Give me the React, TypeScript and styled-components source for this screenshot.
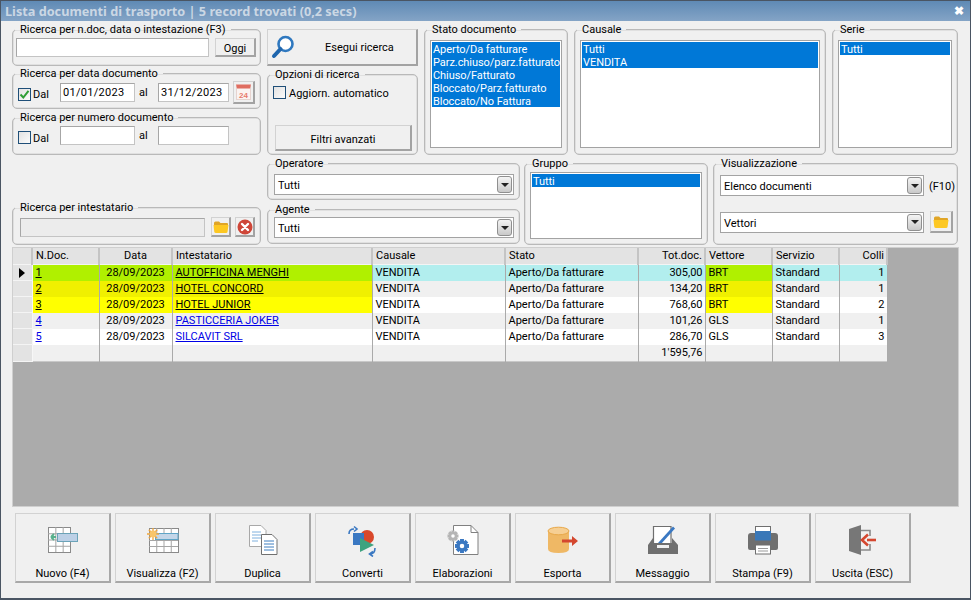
import React from 'react';
import styled, { createGlobalStyle } from 'styled-components';

const GlobalStyle = createGlobalStyle`
  html, body { margin: 0; padding: 0; background: #f0f0f0; }
  body { font-family: Roboto, "Liberation Sans", sans-serif; font-size: 11px; color: #000; }
`;

const Window = styled.div`
  width: 971px;
  height: 600px;
  box-sizing: border-box;
  background: #f0f0f0;
  border: 1px solid #4a5563;
  border-bottom-width: 2px;
  display: flex;
  flex-direction: column;
  overflow: hidden;
`;

const TitleBar = styled.div`
  height: 20px;
  flex: none;
  display: flex;
  align-items: center;
  justify-content: space-between;
  padding: 0 6px 0 4px;
  background: linear-gradient(180deg, #5f8ab5 0%, #84a4c6 100%);
  color: #cbd7e4;
  font-family: "Noto Sans", sans-serif;
  font-weight: 700;
  font-size: 12.7px;
`;

const CloseBox = styled.span`
  color: #fff;
  font-size: 12px;
  font-weight: 700;
  line-height: 1;
`;

const Body = styled.div`
  flex: 1;
  display: flex;
  flex-direction: column;
  padding: 1px 0 0 11px;
`;

const UpperRow = styled.div`
  display: grid;
  grid-template-columns: 249px 151px 144px 252px 126px;
  height: 133px;
  column-gap: 6px;
`;

const LowerRow = styled.div`
  display: flex;
  height: 89px;
  margin-top: 1px;
`;

const Stack = styled.div`
  display: flex;
  flex-direction: column;
  width: ${p => p.$w}px;
  margin-right: ${p => p.$mr || 0}px;
  justify-content: ${p => p.$end ? 'flex-end' : 'flex-start'};
`;

const Group = styled.fieldset`
  box-sizing: border-box;
  margin: ${p => p.$mt || 0}px ${p => p.$mr || 0}px 0 0;
  padding: 0;
  min-width: 0;
  width: ${p => p.$w ? `${p.$w}px` : 'auto'};
  height: ${p => p.$h ? `${p.$h}px` : 'auto'};
  border: 1px solid #b9b9b9;
  box-shadow: inset 0 0 0 0.5px #cfcfcf;
  border-radius: 5px;
  position: relative;
`;

const Legend = styled.legend`
  margin-left: 2px;
  padding: 0 5px;
  height: 14px;
  line-height: 16px;
  font-size: 11px;
  white-space: nowrap;
`;

const Row = styled.div`
  display: flex;
  align-items: center;
  padding: ${p => p.$pad || '0'};
`;

const TextBox = styled.div`
  box-sizing: border-box;
  width: ${p => p.$w}px;
  height: ${p => p.$h || 19}px;
  margin-right: ${p => p.$mr || 0}px;
  background: ${p => p.$disabled ? '#ececec' : '#fff'};
  border: 1px solid #a6a6a6;
  border-right-color: #c4c4c4;
  border-bottom-color: #c4c4c4;
  padding-left: 2px;
  line-height: 17px;
  letter-spacing: 0.3px;
`;

const Raised = styled.button`
  box-sizing: border-box;
  width: ${p => p.$w}px;
  height: ${p => p.$h}px;
  margin: 0 ${p => p.$mr || 0}px 0 ${p => p.$ml || 0}px;
  padding: ${p => p.$pt || 0}px 0 0;
  flex: none;
  font: inherit;
  color: #000;
  background: #f0f0f0;
  border: 1px solid #d2d2d2;
  border-right: 2px solid #a3a3a3;
  border-bottom: 2px solid #a3a3a3;
  display: flex;
  align-items: center;
  justify-content: center;
`;

const SearchButton = styled(Raised)`
  justify-content: flex-start;
  padding-left: 3px;
  margin-top: 7px;
`;

const SearchLabel = styled.span`
  margin-left: 30px;
`;

const CheckMark = styled.span`
  box-sizing: border-box;
  width: 13px;
  height: 13px;
  flex: none;
  margin: ${p => p.$mt || 0}px ${p => p.$mr || 2}px 0 0;
  border: 1px solid #1f4f78;
  background: linear-gradient(135deg, #e2e2e2, #fbfbfb);
  display: flex;
  align-items: center;
  justify-content: center;
`;

const Plain = styled.span`
  width: ${p => p.$w ? `${p.$w}px` : 'auto'};
  margin-left: ${p => p.$ml || 0}px;
  margin-top: ${p => p.$mt || 0}px;
  flex: none;
`;

const ListBox = styled.div`
  box-sizing: border-box;
  height: ${p => p.$h}px;
  margin: ${p => p.$m};
  background: #fff;
  border: 1px solid #a3a3a3;
  padding: 1px;
  overflow: hidden;
`;

const ListItem = styled.div`
  height: 13px;
  line-height: 15px;
  letter-spacing: -0.06px;
  background: #0078d7;
  color: #fff;
  padding-left: 1px;
  white-space: nowrap;
  overflow: hidden;
`;

const Select = styled.div`
  box-sizing: border-box;
  width: ${p => p.$w}px;
  height: ${p => p.$h || 21}px;
  margin: ${p => p.$m || 0};
  background: #fff;
  border: 1px solid #a3a3a3;
  display: flex;
  align-items: center;
  justify-content: space-between;
  padding: 0 1px 0 3px;
  flex: none;
`;

const SelectText = styled.span`
  margin-top: 2px;
`;

const Arrow = styled.span`
  box-sizing: border-box;
  width: 15px;
  height: 17px;
  border: 1px solid #8f8f8f;
  border-radius: 3px;
  background: linear-gradient(180deg, #f4f4f4, #c9c9c9);
  display: flex;
  align-items: center;
  justify-content: center;

  &::after {
    content: '';
    border-left: 4px solid transparent;
    border-right: 4px solid transparent;
    border-top: 4px solid #222;
  }
`;

const GridArea = styled.div`
  box-sizing: border-box;
  width: 947px;
  height: 260px;
  margin-top: 2px;
  background: #ababab;
  border: 1px solid #cfcfcf;
`;

const Table = styled.table`
  table-layout: fixed;
  border-collapse: collapse;
  width: 874px;
  font-size: 11px;
`;

const HeadCell = styled.th`
  height: 16px;
  padding: 1px ${p => p.$align === 'right' ? 2 : 3}px 0 3px;
  background: #e3e3e3;
  border-right: 2px solid #c4c4c4;
  border-bottom: 1px solid #f4f4f4;
  font-weight: 400;
  text-align: ${p => p.$align || 'left'};
  line-height: 14px;
  white-space: nowrap;
  overflow: hidden;
  box-sizing: border-box;
`;

const RowHead = styled.td`
  height: 16px;
  padding: 0;
  background: #e3e3e3;
  border-right: 1px solid #f7f7f7;
  border-bottom: 1px solid #f4f4f4;
  text-align: center;
  box-sizing: border-box;
`;

const Marker = styled.span`
  display: inline-block;
  border-left: 6px solid #000;
  border-top: 5px solid transparent;
  border-bottom: 5px solid transparent;
  vertical-align: middle;
`;

const Cell = styled.td`
  height: 16px;
  padding: 1px ${p => p.$align === 'right' ? 2 : 3}px 1px 3px;
  box-sizing: border-box;
  background: ${p => p.$bg};
  border-right: 1px solid #aaa;
  text-align: ${p => p.$align || 'left'};
  line-height: 14px;
  white-space: nowrap;
  overflow: hidden;
`;

const TotalRow = styled.tr`
  border-bottom: 1px solid #c8c8c8;
`;

const DocLink = styled.a`
  color: ${p => p.$dark ? '#000' : '#0000e6'};
  text-decoration: underline;
`;

const Toolbar = styled.div`
  display: flex;
  gap: 4px;
  margin: 6px 0 0 3px;
`;

const ToolButton = styled.button`
  box-sizing: border-box;
  width: 96px;
  height: 70px;
  padding: 10px 0 0;
  font: inherit;
  color: #000;
  background: #f0f0f0;
  border: 1px solid #d2d2d2;
  border-right: 2px solid #a8a8a8;
  border-bottom: 2px solid #a8a8a8;
  display: flex;
  flex-direction: column;
  align-items: center;
`;

const ToolLabel = styled.span`
  margin-top: 9px;
  line-height: 16px;
`;

const SvgIcon = styled.svg`
  display: block;
  flex: none;
`;

const Magnifier = () => (
  <SvgIcon width="24" height="24" viewBox="0 0 24 24">
    <circle cx="14.5" cy="9" r="7" fill="#fff" stroke="#2f78bf" strokeWidth="2.6" />
    <path d="M9.5 14 L3 21" stroke="#1f66ae" strokeWidth="4" strokeLinecap="round" />
  </SvgIcon>
);

const Folder = () => (
  <SvgIcon width="16" height="14" viewBox="0 0 16 14">
    <path d="M1 3 Q1 1.5 2.5 1.5 H6 L7.5 3 H14 Q15 3 15 4 V5 H1 Z" fill="#e0a526" />
    <path d="M0.5 5 H15.5 L14.5 12 Q14.3 13 13 13 H3 Q1.5 13 1.3 12 Z" fill="#fdc823" />
  </SvgIcon>
);

const CancelIcon = () => (
  <SvgIcon width="16" height="16" viewBox="0 0 16 16">
    <circle cx="8" cy="8" r="7.5" fill="#cf4638" />
    <path d="M5 5 L11 11 M11 5 L5 11" stroke="#fff" strokeWidth="2.4" strokeLinecap="round" />
  </SvgIcon>
);

const CalendarIcon = () => (
  <SvgIcon width="18" height="18" viewBox="0 0 18 18">
    <rect x="1.5" y="3.5" width="14" height="13" fill="#fbf3f1" stroke="#e6d3cf" />
    <path d="M1 1.5 H16 L15 5.5 H2 Z" fill="#df6d60" />
    <text x="8.5" y="14.5" fontSize="8" fontWeight="700" fill="#e77a6c" textAnchor="middle" fontFamily="Liberation Sans">24</text>
  </SvgIcon>
);

const Tick = () => (
  <SvgIcon width="11" height="11" viewBox="0 0 11 11">
    <path d="M1.5 5.5 L4.3 8.5 L9.5 1.8" fill="none" stroke="#2f9e35" strokeWidth="2" />
  </SvgIcon>
);

const GridLines = ({ x, y, w, h, cols, rows }: { x: number; y: number; w: number; h: number; cols: number; rows: number }) => (
  <g stroke="#8a8a8a" strokeWidth="1" fill="#fff">
    <rect x={x + 0.5} y={y + 0.5} width={w} height={h} />
    {Array.from({ length: cols - 1 }, (_, i) => (
      <line key={`c${i}`} x1={x + 0.5 + ((i + 1) * w) / cols} x2={x + 0.5 + ((i + 1) * w) / cols} y1={y} y2={y + h} stroke="#a5a5a5" />
    ))}
    {Array.from({ length: rows - 1 }, (_, i) => (
      <line key={`r${i}`} y1={y + 0.5 + ((i + 1) * h) / rows} y2={y + 0.5 + ((i + 1) * h) / rows} x1={x} x2={x + w} stroke="#a5a5a5" />
    ))}
  </g>
);

const Gear = ({ cx, cy, r, fill }: { cx: number; cy: number; r: number; fill: string }) => (
  <g>
    {[0, 45, 90, 135].map(a => (
      <rect key={a} x={cx - r * 0.28} y={cy - r} width={r * 0.56} height={r * 2} fill={fill} transform={`rotate(${a} ${cx} ${cy})`} />
    ))}
    <circle cx={cx} cy={cy} r={r * 0.72} fill={fill} />
    <circle cx={cx} cy={cy} r={r * 0.32} fill="#fff" />
  </g>
);

const icons: Record<string, React.ReactNode> = {
  nuovo: (
    <>
      <GridLines x={5} y={3} w={22} h={25} cols={3} rows={4} />
      <rect x={14.5} y={9.5} width={20} height={8} fill="#bcd0e6" stroke="#6ba3b8" />
      <path d="M13 13 H8 M8 13 L11 10 M8 13 L11 16" fill="none" stroke="#58b08c" strokeWidth="2" />
    </>
  ),
  visualizza: (
    <>
      <GridLines x={6} y={4} w={29} h={24} cols={4} rows={4} />
      <rect x={12.5} y={9.5} width={22.5} height={6} fill="#c4d6e8" stroke="#5fa5c7" />
      <g stroke="#f0a63c" strokeWidth="1.3">
        <path d="M10 4 V16 M4 10 H16 M5.8 5.8 L14.2 14.2 M14.2 5.8 L5.8 14.2" />
      </g>
      <circle cx="10" cy="10" r="3.4" fill="#f8c56a" />
    </>
  ),
  duplica: (
    <>
      <path d="M6.5 1.5 H18 L23 6.5 V22.5 H6.5 Z" fill="#fff" stroke="#a8a8a8" />
      <path d="M9 8 H18 M9 11 H18 M9 14 H18 M9 17 H15" stroke="#7fb0de" strokeWidth="1" />
      <path d="M18.5 10.5 H29 L34 15.5 V30.5 H18.5 Z" fill="#fff" stroke="#707070" />
      <path d="M21 17 H31 M21 20 H31 M21 23 H31 M21 26 H31" stroke="#3f7fc0" strokeWidth="1" />
    </>
  ),
  converti: (
    <>
      <circle cx="24" cy="13" r="7" fill="#d9482b" />
      <rect x="10" y="9" width="11" height="12" fill="#3a78c2" />
      <path d="M17 14 L31 21 L17 28 Z" fill="#3fa37f" />
      <path d="M6 10 Q6 5 11 5 M11 2.5 L14 5 L11 7.5" fill="none" stroke="#3a78c2" strokeWidth="1.6" />
      <path d="M32 24 Q32 30 27 30 M30 27.5 L26.5 30 L30 32.5" fill="none" stroke="#3a78c2" strokeWidth="1.6" />
    </>
  ),
  elaborazioni: (
    <>
      <path d="M10.5 1.5 H28 L35 8.5 V30.5 H10.5 Z" fill="#fff" stroke="#808080" />
      <path d="M28 1.5 V8.5 H35" fill="none" stroke="#808080" />
      <Gear cx={10} cy={12} r={5.5} fill="#b5b5b5" />
      <Gear cx={19} cy={22} r={7} fill="#3a78c2" />
    </>
  ),
  esporta: (
    <>
      <path d="M5 7 V25 Q5 29 15.5 29 Q26 29 26 25 V7 Z" fill="#efb865" />
      <ellipse cx="15.5" cy="7" rx="10.5" ry="3.8" fill="#f6cf93" stroke="#e8a849" />
      <path d="M19 15.5 H29 V12 L35 17 L29 22 V18.5 H19 Z" fill="#d4472f" />
    </>
  ),
  messaggio: (
    <>
      <path d="M10.5 2.5 H28 V22 H10.5 Z" fill="#fff" stroke="#6f6f6f" strokeWidth="1.2" />
      <path d="M15 19 L30 2.5 L32 4.5 L18 20 L14.5 21 Z" fill="#3a78c2" />
      <path d="M5 21 L10 14 V19 H29 V14 L35 21 V30 H5 Z" fill="#6f6f6f" />
      <path d="M14 21 H26 V24 H14 Z" fill="#f0f0f0" />
    </>
  ),
  stampa: (
    <>
      <rect x="12.5" y="2.5" width="15" height="8" fill="#fff" stroke="#6f6f6f" />
      <path d="M5 12 Q5 9 8 9 H32 Q35 9 35 12 V24 Q35 26 33 26 H7 Q5 26 5 24 Z" fill="#6f6f6f" />
      <rect x="12" y="7" width="16" height="9.5" fill="#3a78b8" />
      <rect x="12.5" y="21" width="15" height="9" fill="#fff" stroke="#6f6f6f" />
      <path d="M15 24.5 H25 M15 27 H25" stroke="#9a9a9a" />
    </>
  ),
  uscita: (
    <>
      <path d="M18 6.5 H27 V12 M27 20 V26 H18" fill="none" stroke="#8a8a8a" strokeWidth="1.6" />
      <path d="M6 5 L18 1 V31 L6 27 Z" fill="#777" />
      <path d="M33 16 H24" stroke="#d4472f" strokeWidth="2.6" />
      <path d="M25 10.5 L19 16 L25 21.5" fill="none" stroke="#d4472f" strokeWidth="2.6" />
    </>
  ),
};

const toolButtons = [
  ['nuovo', 'Nuovo (F4)'],
  ['visualizza', 'Visualizza (F2)'],
  ['duplica', 'Duplica'],
  ['converti', 'Converti'],
  ['elaborazioni', 'Elaborazioni'],
  ['esporta', 'Esporta'],
  ['messaggio', 'Messaggio'],
  ['stampa', 'Stampa (F9)'],
  ['uscita', 'Uscita (ESC)'],
];

const columns: [string, number, 'left' | 'center' | 'right'][] = [
  ['N.Doc.', 67, 'left'],
  ['Data', 73, 'center'],
  ['Intestatario', 200, 'left'],
  ['Causale', 133, 'left'],
  ['Stato', 133, 'left'],
  ['Tot.doc.', 67, 'right'],
  ['Vettore', 67, 'left'],
  ['Servizio', 67, 'left'],
  ['Colli', 48, 'right'],
];

const rows = [
  { n: '1', name: 'AUTOFFICINA MENGHI', tot: '305,00', vet: 'BRT', colli: '1', mark: '#b0f000', base: '#b2eeee' },
  { n: '2', name: 'HOTEL CONCORD', tot: '134,20', vet: 'BRT', colli: '1', mark: '#f0f000', base: '#f0f0f0' },
  { n: '3', name: 'HOTEL JUNIOR', tot: '768,60', vet: 'BRT', colli: '2', mark: '#ffff00', base: '#ffffff' },
  { n: '4', name: 'PASTICCERIA JOKER', tot: '101,26', vet: 'GLS', colli: '1', mark: '', base: '#f0f0f0' },
  { n: '5', name: 'SILCAVIT SRL', tot: '286,70', vet: 'GLS', colli: '3', mark: '', base: '#ffffff' },
];

const App: React.FC = () => (
  <Window>
    <GlobalStyle />
    <TitleBar>
      <span>Lista documenti di trasporto | 5 record trovati (0,2 secs)</span>
      <CloseBox>✖</CloseBox>
    </TitleBar>
    <Body>
      <UpperRow>
        <Stack $w={249}>
          <Group $h={44}>
            <Legend>Ricerca per n.doc, data o intestazione (F3)</Legend>
            <Row $pad="2px 0 0 3px">
              <TextBox $w={193} $mr={6} />
              <Raised $w={41} $h={19} $pt={2}>Oggi</Raised>
            </Row>
          </Group>
          <Group $h={43}>
            <Legend>Ricerca per data documento</Legend>
            <Row $pad="1px 0 0 5px">
              <CheckMark $mr={2} $mt={3}><Tick /></CheckMark>
              <Plain $w={27} $mt={4}>Dal</Plain>
              <TextBox $w={75} $mr={4}>01/01/2023</TextBox>
              <Plain $w={19}>al</Plain>
              <TextBox $w={71} $mr={4}>31/12/2023</TextBox>
              <Raised $w={22} $h={23}><CalendarIcon /></Raised>
            </Row>
          </Group>
          <Group $h={45} $mt={1}>
            <Legend>Ricerca per numero documento</Legend>
            <Row $pad="2px 0 0 5px">
              <CheckMark $mr={2} $mt={4} />
              <Plain $w={27} $mt={6}>Dal</Plain>
              <TextBox $w={75} $mr={4} />
              <Plain $w={19}>al</Plain>
              <TextBox $w={71} />
            </Row>
          </Group>
        </Stack>
        <Stack $w={151}>
          <SearchButton $w={151} $h={37}>
            <Magnifier />
            <SearchLabel>Esegui ricerca</SearchLabel>
          </SearchButton>
          <Group $h={88} $mt={1}>
            <Legend>Opzioni di ricerca</Legend>
            <Row $pad="4px 0 25px 5px">
              <CheckMark $mr={3} />
              <Plain $mt={2}>Aggiorn. automatico</Plain>
            </Row>
            <Raised $w={137} $h={26} $ml={7} $pt={3}>Filtri avanzati</Raised>
          </Group>
        </Stack>
        <Group>
          <Legend>Stato documento</Legend>
          <ListBox $h={108} $m="4px 5px 0 5px">
            {['Aperto/Da fatturare', 'Parz.chiuso/parz.fatturato', 'Chiuso/Fatturato', 'Bloccato/Parz.fatturato', 'Bloccato/No Fattura'].map(s => (
              <ListItem key={s}>{s}</ListItem>
            ))}
          </ListBox>
        </Group>
        <Group>
          <Legend>Causale</Legend>
          <ListBox $h={108} $m="4px 5px 0 5px">
            <ListItem>Tutti</ListItem>
            <ListItem>VENDITA</ListItem>
          </ListBox>
        </Group>
        <Group>
          <Legend>Serie</Legend>
          <ListBox $h={108} $m="4px 5px 0 5px">
            <ListItem>Tutti</ListItem>
          </ListBox>
        </Group>
      </UpperRow>
      <LowerRow>
        <Stack $w={249} $mr={6} $end>
          <Group $h={45}>
            <Legend>Ricerca per intestatario</Legend>
            <Row $pad="3px 0 0 7px">
              <TextBox $w={185} $h={19} $mr={6} $disabled />
              <Raised $w={20} $h={20} $mr={4}><Folder /></Raised>
              <Raised $w={20} $h={20}><CancelIcon /></Raised>
            </Row>
          </Group>
        </Stack>
        <Stack $w={253} $mr={4}>
          <Group $h={44}>
            <Legend>Operatore</Legend>
            <Select $w={240} $m="4px 0 0 6px"><SelectText>Tutti</SelectText><Arrow /></Select>
          </Group>
          <Group $h={42} $mt={2}>
            <Legend>Agente</Legend>
            <Select $w={240} $m="1px 0 0 6px"><SelectText>Tutti</SelectText><Arrow /></Select>
          </Group>
        </Stack>
        <Group $w={184} $mr={5}>
          <Legend>Gruppo</Legend>
          <ListBox $h={67} $m="2px 5px 0 5px">
            <ListItem>Tutti</ListItem>
          </ListBox>
        </Group>
        <Group $w={245}>
          <Legend>Visualizzazione</Legend>
          <Row $pad="5px 0 0 6px">
            <Select $w={204}><SelectText>Elenco documenti</SelectText><Arrow /></Select>
            <Plain $ml={5} $mt={2}>(F10)</Plain>
          </Row>
          <Row $pad="15px 0 0 6px">
            <Select $w={204}><SelectText>Vettori</SelectText><Arrow /></Select>
            <Raised $w={23} $h={22} $ml={6}><Folder /></Raised>
          </Row>
        </Group>
      </LowerRow>
      <GridArea>
        <Table>
          <colgroup>
            <col style={{ width: 19 }} />
            {columns.map(([name, w]) => <col key={name} style={{ width: w }} />)}
          </colgroup>
          <thead>
            <tr>
              <HeadCell />
              {columns.map(([name, , align]) => <HeadCell key={name} $align={align}>{name}</HeadCell>)}
            </tr>
          </thead>
          <tbody>
            {rows.map((r, i) => (
              <tr key={r.n}>
                <RowHead>{i === 0 && <Marker />}</RowHead>
                <Cell $bg={r.mark || r.base}><DocLink $dark={!!r.mark}>{r.n}</DocLink></Cell>
                <Cell $bg={r.mark || r.base} $align="center">28/09/2023</Cell>
                <Cell $bg={r.mark || r.base}><DocLink $dark={!!r.mark}>{r.name}</DocLink></Cell>
                <Cell $bg={r.base}>VENDITA</Cell>
                <Cell $bg={r.base}>Aperto/Da fatturare</Cell>
                <Cell $bg={r.base} $align="right">{r.tot}</Cell>
                <Cell $bg={r.mark || r.base}>{r.vet}</Cell>
                <Cell $bg={r.base}>Standard</Cell>
                <Cell $bg={r.base} $align="right">{r.colli}</Cell>
              </tr>
            ))}
            <TotalRow>
              <RowHead />
              <Cell $bg="#f0f0f0" />
              <Cell $bg="#f0f0f0" />
              <Cell $bg="#f0f0f0" />
              <Cell $bg="#f0f0f0" />
              <Cell $bg="#f0f0f0" />
              <Cell $bg="#f0f0f0" $align="right">1'595,76</Cell>
              <Cell $bg="#f0f0f0" />
              <Cell $bg="#f0f0f0" />
              <Cell $bg="#f0f0f0" />
            </TotalRow>
          </tbody>
        </Table>
      </GridArea>
      <Toolbar>
        {toolButtons.map(([key, label]) => (
          <ToolButton key={key}>
            <SvgIcon width="40" height="33" viewBox="0 0 40 33">{icons[key]}</SvgIcon>
            <ToolLabel>{label}</ToolLabel>
          </ToolButton>
        ))}
      </Toolbar>
    </Body>
  </Window>
);

export default App;
